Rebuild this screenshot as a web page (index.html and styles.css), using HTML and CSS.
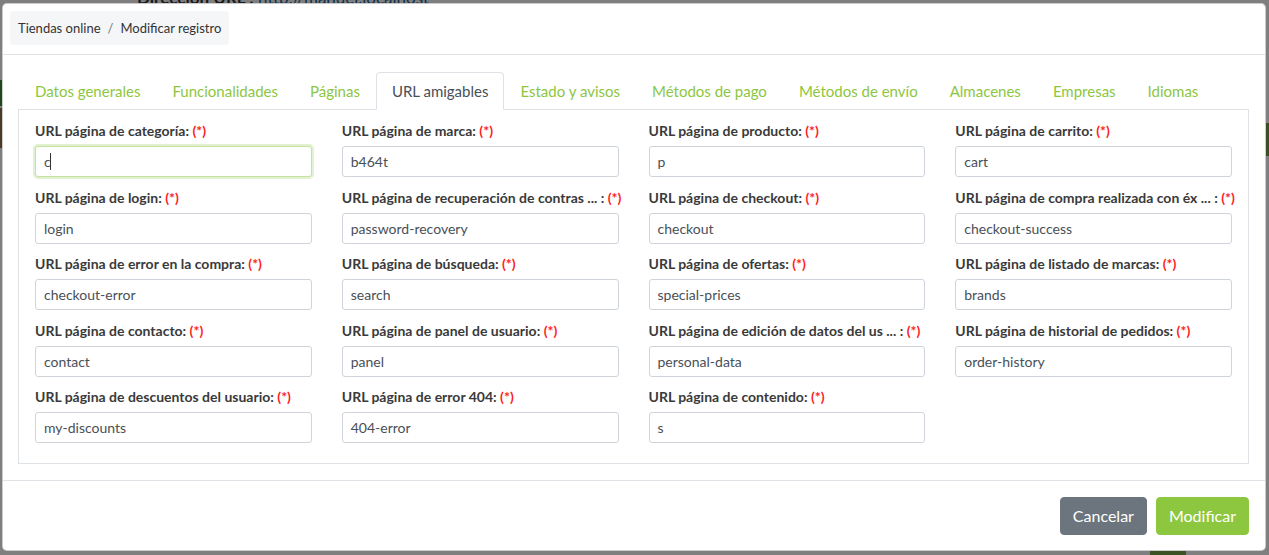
FILE: index.html
```html
<!DOCTYPE html>
<html lang="es">
<head>
<meta charset="utf-8">
<title>Modificar registro</title>
<link rel="stylesheet" href="styles.css">
</head>
<body>
<div class="behind">
  <div class="behind-title"><b>Dirección URL :</b> <span class="behind-link">http://manuel.localhost</span></div>
  <div class="decor decor-left"></div>
  <div class="decor decor-left2"></div>
  <div class="decor decor-right"></div>
  <div class="decor decor-bottom"></div>
</div>
<div class="modal">
  <div class="modal-header">
    <ol class="breadcrumb">
      <li>Tiendas online</li>
      <li class="sep">/</li>
      <li>Modificar registro</li>
    </ol>
  </div>
  <div class="modal-body">
    <ul class="tabs">
      <li class="tab">Datos generales</li>
      <li class="tab">Funcionalidades</li>
      <li class="tab">Páginas</li>
      <li class="tab active">URL amigables</li>
      <li class="tab">Estado y avisos</li>
      <li class="tab">Métodos de pago</li>
      <li class="tab">Métodos de envío</li>
      <li class="tab">Almacenes</li>
      <li class="tab">Empresas</li>
      <li class="tab">Idiomas</li>
    </ul>
    <div class="panel">
      <div class="grid">
        <div class="field"><label>URL página de categoría: <span class="req">(*)</span></label><div class="input focused">c<span class="caret"></span></div></div>
        <div class="field"><label>URL página de marca: <span class="req">(*)</span></label><div class="input">b464t</div></div>
        <div class="field"><label>URL página de producto: <span class="req">(*)</span></label><div class="input">p</div></div>
        <div class="field"><label>URL página de carrito: <span class="req">(*)</span></label><div class="input">cart</div></div>

        <div class="field"><label>URL página de login: <span class="req">(*)</span></label><div class="input">login</div></div>
        <div class="field"><label>URL página de recuperación de contras ... : <span class="req">(*)</span></label><div class="input">password-recovery</div></div>
        <div class="field"><label>URL página de checkout: <span class="req">(*)</span></label><div class="input">checkout</div></div>
        <div class="field"><label>URL página de compra realizada con éx ... : <span class="req">(*)</span></label><div class="input">checkout-success</div></div>

        <div class="field"><label>URL página de error en la compra: <span class="req">(*)</span></label><div class="input">checkout-error</div></div>
        <div class="field"><label>URL página de búsqueda: <span class="req">(*)</span></label><div class="input">search</div></div>
        <div class="field"><label>URL página de ofertas: <span class="req">(*)</span></label><div class="input">special-prices</div></div>
        <div class="field"><label>URL página de listado de marcas: <span class="req">(*)</span></label><div class="input">brands</div></div>

        <div class="field"><label>URL página de contacto: <span class="req">(*)</span></label><div class="input">contact</div></div>
        <div class="field"><label>URL página de panel de usuario: <span class="req">(*)</span></label><div class="input">panel</div></div>
        <div class="field"><label>URL página de edición de datos del us ... : <span class="req">(*)</span></label><div class="input">personal-data</div></div>
        <div class="field"><label>URL página de historial de pedidos: <span class="req">(*)</span></label><div class="input">order-history</div></div>

        <div class="field"><label>URL página de descuentos del usuario: <span class="req">(*)</span></label><div class="input">my-discounts</div></div>
        <div class="field"><label>URL página de error 404: <span class="req">(*)</span></label><div class="input">404-error</div></div>
        <div class="field"><label>URL página de contenido: <span class="req">(*)</span></label><div class="input">s</div></div>
      </div>
    </div>
  </div>
  <div class="modal-footer">
    <button class="btn btn-secondary">Cancelar</button>
    <button class="btn btn-primary">Modificar</button>
  </div>
</div>
</body>
</html>
```
FILE: styles.css
```css
* { box-sizing: border-box; }
html, body { margin: 0; padding: 0; }
body {
  font-family: Lato, "Open Sans", "Liberation Sans", sans-serif;
  background: #7f7f7f;
  color: #333;
  width: 1269px;
  height: 555px;
  overflow: hidden;
  position: relative;
}
.behind { position: absolute; inset: 0; z-index: 0; }
.behind-title {
  position: absolute;
  left: 137px;
  top: -13px;
  font-size: 17px;
  color: #1a1a1a;
  white-space: nowrap;
}
.behind-link { color: #10304a; }
.decor { position: absolute; }
.decor-left { left: 0; top: 80px; width: 3px; height: 26px; background: #1d4a1d; }
.decor-left2 { left: 0; top: 108px; width: 3px; height: 40px; background: #4a3a26; }
.decor-right { right: 0; top: 123px; width: 4px; height: 33px; background: #3a4f22; }
.decor-bottom { left: 1150px; top: 549px; width: 36px; height: 6px; background: #3b5323; }

.modal {
  position: relative;
  z-index: 1;
  margin: 3px 3px 0 2px;
  width: 1264px;
  background: #fff;
  border: 1px solid rgba(0,0,0,.2);
  border-radius: 5px;
}
.modal-header {
  padding: 7px 7px 9px 7px;
  border-bottom: 1px solid #dee2e6;
}
.breadcrumb {
  display: inline-flex;
  list-style: none;
  margin: 0;
  padding: 7px 8px 7px 8px;
  background: #f5f6f8;
  border-radius: 4px;
  font-size: 13px;
  line-height: 20px;
  color: #333;
}
.breadcrumb .sep { color: #6c757d; padding: 0 7px; }

.modal-body { padding: 17px 16px 16px 15px; }
.tabs {
  display: flex;
  list-style: none;
  margin: 0;
  padding: 0 0 0 1px;
  border-bottom: 1px solid #dee2e6;
}
.tab {
  padding: 6px 15px 6px 15px;
  font-size: 15px;
  line-height: 24px;
  color: #8dc63f;
  border: 1px solid transparent;
  border-top-left-radius: 4px;
  border-top-right-radius: 4px;
  margin-bottom: -1px;
  white-space: nowrap;
}
.tab.active {
  color: #495057;
  background: #fff;
  border-color: #dee2e6 #dee2e6 #fff;
}
.panel {
  border: 1px solid #dee2e6;
  border-top: none;
  padding: 10px 16px 20px 16px;
}
.grid {
  display: grid;
  grid-template-columns: repeat(4, minmax(0, 1fr));
  column-gap: 30px;
  row-gap: 9.5px;
}
.field { min-width: 0; }
.field label {
  display: block;
  font-weight: 700;
  font-size: 14px;
  line-height: 21px;
  margin-bottom: 5px;
  color: #3a3a3a;
  white-space: nowrap;
}
.req { color: #ff2020; font-weight: 700; }
.input {
  height: 31px;
  border: 1px solid #ced4da;
  border-radius: 3px;
  padding: 4px 8px;
  font-size: 14px;
  line-height: 21px;
  color: #495057;
  background: #fff;
}
.input.focused {
  border-color: #c6e2a2;
  box-shadow: 0 0 0 2px rgba(141,198,63,.25);
}
.caret {
  display: inline-block;
  width: 1px;
  height: 17px;
  background: #333;
  vertical-align: -3px;
  margin-left: -1px;
}
.modal-footer {
  display: flex;
  justify-content: flex-end;
  align-items: center;
  gap: 9px;
  border-top: 1px solid #dee2e6;
  padding: 16px 16px 15px 16px;
}
.btn {
  font-family: inherit;
  font-size: 16px;
  line-height: 24px;
  padding: 6px 12px;
  border: 1px solid transparent;
  border-radius: 4px;
  color: #fff;
}
.btn-secondary { background: #6c757d; border-color: #6c757d; }
.btn-primary { background: #8dc63f; border-color: #8dc63f; }
```
